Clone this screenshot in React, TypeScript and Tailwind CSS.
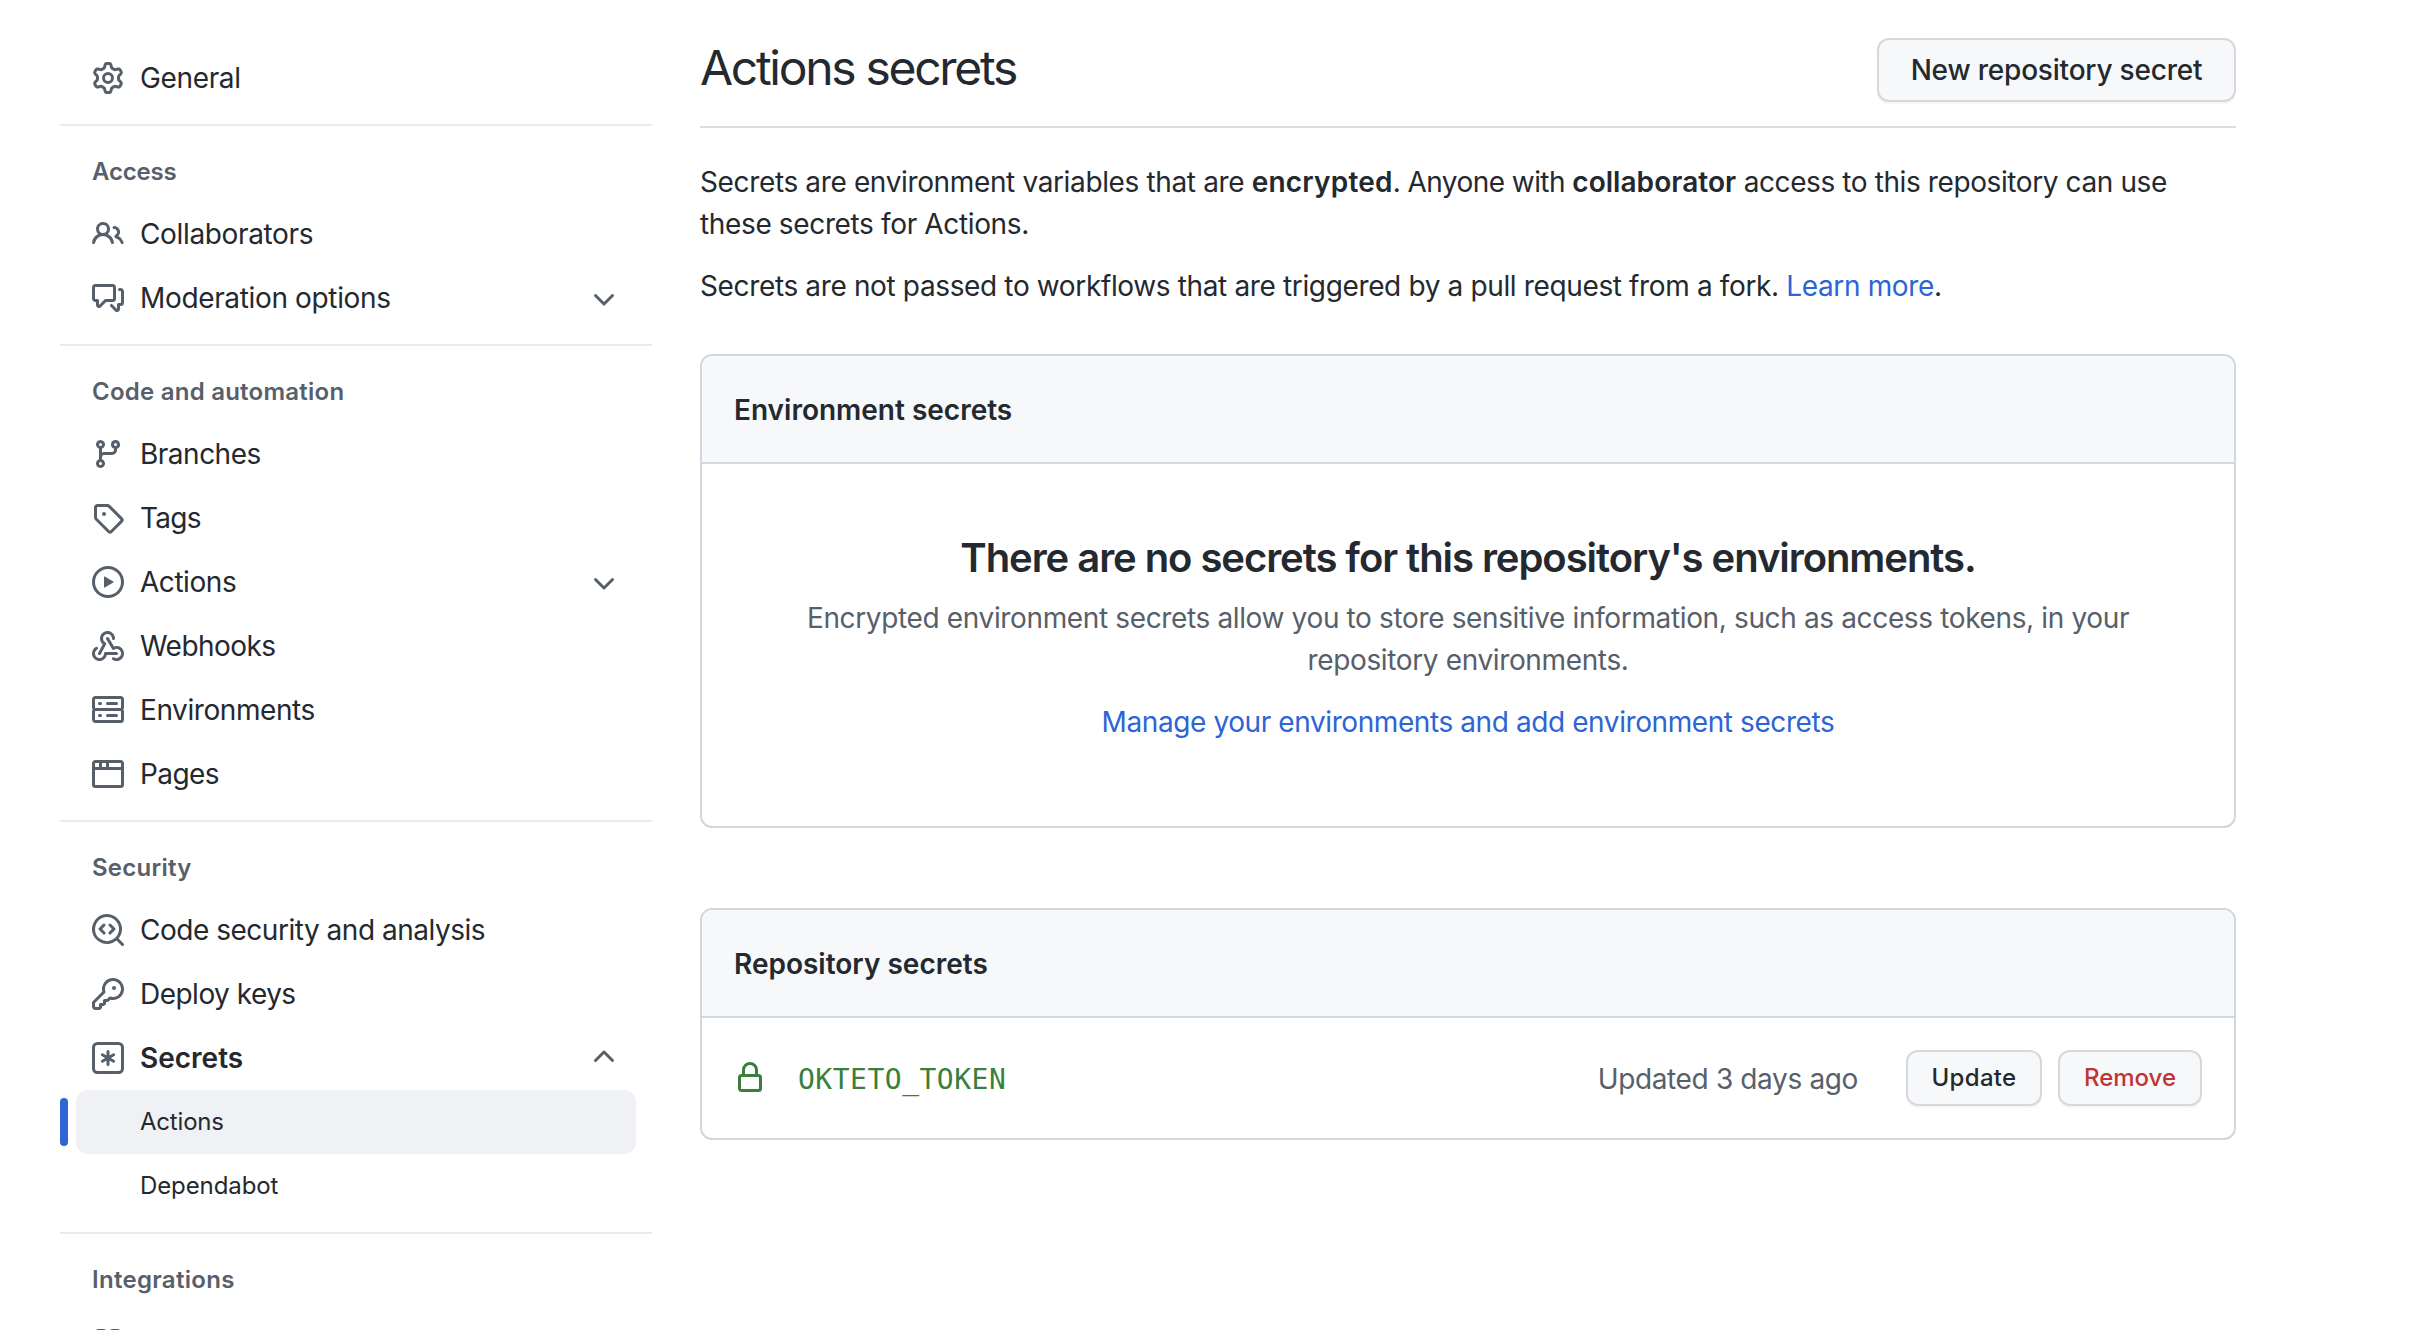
import type { ReactNode } from 'react';

const PATHS = {
  gear: 'M7.429 1.525a6.593 6.593 0 011.142 0c.036.003.108.036.137.146l.289 1.105c.147.56.55.967.997 1.189.174.086.341.183.501.29.417.278.97.423 1.53.27l1.102-.303c.11-.03.175.016.195.046.219.31.41.641.573.989.014.031.022.11-.059.19l-.815.806c-.411.406-.562.957-.53 1.456a4.588 4.588 0 010 .582c-.032.499.119 1.05.53 1.456l.815.806c.08.08.073.159.059.19a6.494 6.494 0 01-.573.99c-.02.029-.086.074-.195.045l-1.103-.303c-.559-.153-1.112-.008-1.529.27-.16.107-.327.204-.5.29-.449.222-.851.628-.998 1.189l-.289 1.105c-.029.11-.101.143-.137.146a6.613 6.613 0 01-1.142 0c-.036-.003-.108-.037-.137-.146l-.289-1.105c-.147-.56-.55-.967-.997-1.189a4.502 4.502 0 01-.501-.29c-.417-.278-.97-.423-1.53-.27l-1.102.303c-.11.03-.175-.016-.195-.046a6.492 6.492 0 01-.573-.989c-.014-.031-.022-.11.059-.19l.815-.806c.411-.406.562-.957.53-1.456a4.587 4.587 0 010-.582c.032-.499-.119-1.05-.53-1.456l-.815-.806c-.08-.08-.073-.159-.059-.19a6.44 6.44 0 01.573-.99c.02-.029.086-.075.195-.045l1.103.303c.559.153 1.112.008 1.529-.27.16-.107.327-.204.5-.29.449-.222.851-.628.998-1.189l.289-1.105c.029-.11.101-.143.137-.146zM8 0c-.236 0-.47.01-.701.03-.743.065-1.29.615-1.458 1.261l-.29 1.106c-.017.066-.078.158-.211.224a5.994 5.994 0 00-.668.386c-.123.082-.233.09-.3.071L3.27 2.776c-.644-.177-1.392.02-1.82.63a7.977 7.977 0 00-.704 1.217c-.315.675-.111 1.422.363 1.891l.815.806c.05.048.098.147.088.294a6.084 6.084 0 000 .772c.01.147-.038.246-.088.294l-.815.806c-.474.469-.678 1.216-.363 1.891.2.428.436.835.704 1.218.428.609 1.176.806 1.82.63l1.103-.303c.066-.019.176-.011.299.071.213.143.436.272.668.386.133.066.194.158.212.224l.289 1.106c.169.646.715 1.196 1.458 1.26a8.094 8.094 0 001.402 0c.743-.064 1.29-.614 1.458-1.26l.29-1.106c.017-.066.078-.158.211-.224a5.98 5.98 0 00.668-.386c.123-.082.233-.09.3-.071l1.102.302c.644.177 1.392-.02 1.82-.63.268-.382.505-.789.704-1.217.315-.675.111-1.422-.364-1.891l-.814-.806c-.05-.048-.098-.147-.088-.294a6.1 6.1 0 000-.772c-.01-.147.039-.246.088-.294l.814-.806c.475-.469.679-1.216.364-1.891a7.992 7.992 0 00-.704-1.218c-.428-.609-1.176-.806-1.82-.63l-1.103.303c-.066.019-.176.011-.299-.071a5.991 5.991 0 00-.668-.386c-.133-.066-.194-.158-.212-.224L10.16 1.29C9.99.645 9.444.095 8.701.031A8.094 8.094 0 008 0zm1.5 8a1.5 1.5 0 11-3 0 1.5 1.5 0 013 0zM11 8a3 3 0 11-6 0 3 3 0 016 0z',
  people: 'M5.5 3.5a2 2 0 100 4 2 2 0 000-4zM2 5.5a3.5 3.5 0 115.898 2.549 5.507 5.507 0 013.034 4.084.75.75 0 11-1.482.235 4.001 4.001 0 00-7.9 0 .75.75 0 01-1.482-.236A5.507 5.507 0 013.102 8.05 3.49 3.49 0 012 5.5zM11 4a.75.75 0 100 1.5 1.5 1.5 0 01.666 2.844.75.75 0 00-.416.672v.352a.75.75 0 00.574.73c1.2.289 2.162 1.2 2.522 2.372a.75.75 0 101.434-.44 5.01 5.01 0 00-2.56-3.012A3 3 0 0011 4z',
  discussion: 'M1.5 2.75a.25.25 0 01.25-.25h8.5a.25.25 0 01.25.25v5.5a.25.25 0 01-.25.25h-3.5a.75.75 0 00-.53.22L3.5 11.44V9.25a.75.75 0 00-.75-.75h-1a.25.25 0 01-.25-.25v-5.5zM1.75 1A1.75 1.75 0 000 2.75v5.5C0 9.216.784 10 1.75 10H2v1.543a1.457 1.457 0 002.487 1.03L7.061 10h3.189A1.75 1.75 0 0012 8.25v-5.5A1.75 1.75 0 0010.25 1h-8.5zM14.5 4.75a.25.25 0 00-.25-.25h-.5a.75.75 0 110-1.5h.5c.966 0 1.75.784 1.75 1.75v5.5A1.75 1.75 0 0114.25 12H14v1.543a1.457 1.457 0 01-2.487 1.03L9.22 12.28a.75.75 0 111.06-1.06l2.22 2.22v-2.19a.75.75 0 01.75-.75h1a.25.25 0 00.25-.25v-5.5z',
  branch: 'M11.75 2.5a.75.75 0 100 1.5.75.75 0 000-1.5zm-2.25.75a2.25 2.25 0 113 2.122V6A2.5 2.5 0 0110 8.5H6a1 1 0 00-1 1v1.128a2.251 2.251 0 11-1.5 0V5.372a2.25 2.25 0 111.5 0v1.836A2.492 2.492 0 016 7h4a1 1 0 001-1v-.628A2.25 2.25 0 019.5 3.25zM4.25 12a.75.75 0 100 1.5.75.75 0 000-1.5zM3.5 3.25a.75.75 0 111.5 0 .75.75 0 01-1.5 0z',
  tag: 'M2.5 7.775V2.75a.25.25 0 01.25-.25h5.025a.25.25 0 01.177.073l6.25 6.25a.25.25 0 010 .354l-5.025 5.025a.25.25 0 01-.354 0l-6.25-6.25a.25.25 0 01-.073-.177zm-1.5 0V2.75C1 1.784 1.784 1 2.75 1h5.025c.464 0 .91.184 1.238.513l6.25 6.25a1.75 1.75 0 010 2.474l-5.026 5.026a1.75 1.75 0 01-2.474 0l-6.25-6.25A1.75 1.75 0 011 7.775zM6 5a1 1 0 100 2 1 1 0 000-2z',
  play: 'M1.5 8a6.5 6.5 0 1113 0 6.5 6.5 0 01-13 0zM8 0a8 8 0 100 16A8 8 0 008 0zM6.379 5.227A.25.25 0 006 5.442v5.117a.25.25 0 00.379.214l4.264-2.559a.25.25 0 000-.428L6.379 5.227z',
  server: 'M1.75 1A1.75 1.75 0 000 2.75v4c0 .372.116.717.314 1a1.742 1.742 0 00-.314 1v4c0 .966.784 1.75 1.75 1.75h12.5A1.75 1.75 0 0016 12.75v-4c0-.372-.116-.717-.314-1 .198-.283.314-.628.314-1v-4A1.75 1.75 0 0014.25 1H1.75zm0 7.5a.25.25 0 00-.25.25v4c0 .138.112.25.25.25h12.5a.25.25 0 00.25-.25v-4a.25.25 0 00-.25-.25H1.75zM1.5 2.75a.25.25 0 01.25-.25h12.5a.25.25 0 01.25.25v4a.25.25 0 01-.25.25H1.75a.25.25 0 01-.25-.25v-4zm5.5 2A.75.75 0 017.75 4h4.5a.75.75 0 010 1.5h-4.5A.75.75 0 017 4.75zM7.75 10a.75.75 0 000 1.5h4.5a.75.75 0 000-1.5h-4.5zM3 4.75A.75.75 0 013.75 4h.5a.75.75 0 010 1.5h-.5A.75.75 0 013 4.75zM3.75 10a.75.75 0 000 1.5h.5a.75.75 0 000-1.5h-.5z',
  browser: 'M0 2.75C0 1.784.784 1 1.75 1h12.5c.966 0 1.75.784 1.75 1.75v10.5A1.75 1.75 0 0114.25 15H1.75A1.75 1.75 0 010 13.25V2.75zm1.75-.25a.25.25 0 00-.25.25V4.5h2v-2H1.75zM5 2.5v2h2v-2H5zm3.5 0v2h6V2.75a.25.25 0 00-.25-.25H8.5zm6 3.5h-13v7.25c0 .138.112.25.25.25h12.5a.25.25 0 00.25-.25V6z',
  codescan: 'M8.47 4.97a.75.75 0 000 1.06L9.94 7.5 8.47 8.97a.75.75 0 101.06 1.06l2-2a.75.75 0 000-1.06l-2-2a.75.75 0 00-1.06 0zM6.53 6.03a.75.75 0 00-1.06-1.06l-2 2a.75.75 0 000 1.06l2 2a.75.75 0 101.06-1.06L5.06 7.5l1.47-1.47z M12.246 13.307a7.5 7.5 0 111.06-1.06l2.474 2.473a.75.75 0 11-1.06 1.06l-2.474-2.473zM1.5 7.5a6 6 0 1110.386 4.094.75.75 0 00-.292.293A6 6 0 011.5 7.5z',
  key: 'M6.5 5.5a4 4 0 112.731 3.795.75.75 0 00-.768.18L7.44 10.5H6.25a.75.75 0 00-.75.75v1.19l-.06.06H4.25a.75.75 0 00-.75.75v1.19l-.06.06H1.75a.25.25 0 01-.25-.25v-1.69l5.024-5.023a.75.75 0 00.181-.768A3.995 3.995 0 016.5 5.5zm4-5.5a5.5 5.5 0 00-5.348 6.788L.22 11.72a.75.75 0 00-.22.53v2C0 15.216.784 16 1.75 16h2a.75.75 0 00.53-.22l.5-.5a.75.75 0 00.22-.53V14h.75a.75.75 0 00.53-.22l.5-.5a.75.75 0 00.22-.53V12h.75a.75.75 0 00.53-.22l.932-.932A5.5 5.5 0 1010.5 0zm.5 6a1 1 0 100-2 1 1 0 000 2z',
  lock: 'M4 4v2h-.25A1.75 1.75 0 002 7.75v5.5c0 .966.784 1.75 1.75 1.75h8.5A1.75 1.75 0 0014 13.25v-5.5A1.75 1.75 0 0012.25 6H12V4a4 4 0 10-8 0zm6.5 2V4a2.5 2.5 0 10-5 0v2h5zM12 7.5h.25a.25.25 0 01.25.25v5.5a.25.25 0 01-.25.25h-8.5a.25.25 0 01-.25-.25v-5.5a.25.25 0 01.25-.25H12z',
  apps: 'M1.5 3.25c0-.966.784-1.75 1.75-1.75h2.5c.966 0 1.75.784 1.75 1.75v2.5A1.75 1.75 0 015.75 7.5h-2.5A1.75 1.75 0 011.5 5.75v-2.5zM3.25 3a.25.25 0 00-.25.25v2.5c0 .138.112.25.25.25h2.5A.25.25 0 006 5.75v-2.5A.25.25 0 005.75 3h-2.5zM8.5 3.25c0-.966.784-1.75 1.75-1.75h2.5c.966 0 1.75.784 1.75 1.75v2.5a1.75 1.75 0 01-1.75 1.75h-2.5A1.75 1.75 0 018.5 5.75v-2.5zm1.75-.25a.25.25 0 00-.25.25v2.5c0 .138.112.25.25.25h2.5a.25.25 0 00.25-.25v-2.5a.25.25 0 00-.25-.25h-2.5z',
  chevronDown: 'M12.78 6.22a.75.75 0 010 1.06l-4.25 4.25a.75.75 0 01-1.06 0L3.22 7.28a.75.75 0 011.06-1.06L8 9.94l3.72-3.72a.75.75 0 011.06 0z',
  chevronUp: 'M3.22 9.78a.75.75 0 010-1.06l4.25-4.25a.75.75 0 011.06 0l4.25 4.25a.75.75 0 01-1.06 1.06L8 6.06 4.28 9.78a.75.75 0 01-1.06 0z',
};

function Icon({ name }: { name: keyof typeof PATHS }) {
  return (
    <svg viewBox="0 0 16 16" className="size-8 shrink-0" fill="currentColor" fillRule="evenodd">
      <path d={PATHS[name]} />
    </svg>
  );
}

function WebhookIcon() {
  return (
    <svg viewBox="0 0 16 16" className="size-8 shrink-0" fill="currentColor">
      <path d="M5.5 4.25a2.25 2.25 0 014.5 0 .75.75 0 001.5 0 3.75 3.75 0 10-6.14 2.889l-2.272 4.258a.75.75 0 001.324.706L7 7.25a.75.75 0 00-.309-1.015A2.25 2.25 0 015.5 4.25z" />
      <path d="M7.364 3.607a.75.75 0 011.03.257l2.608 4.349a3.75 3.75 0 11-.628 6.785.75.75 0 01.752-1.299 2.25 2.25 0 10-.033-3.88.75.75 0 01-1.03-.256L7.107 4.636a.75.75 0 01.257-1.03z" />
      <path d="M2.9 8.776A.75.75 0 012.625 9.8 2.25 2.25 0 106 11.75a.75.75 0 01.75-.751h5.5a.75.75 0 010 1.5H7.425a3.751 3.751 0 11-5.55-3.998.75.75 0 011.024.274z" />
    </svg>
  );
}

function AsteriskBoxIcon() {
  return (
    <svg viewBox="0 0 16 16" className="size-8 shrink-0" fill="none" stroke="currentColor" strokeWidth="1.5" strokeLinecap="round">
      <rect x="0.75" y="0.75" width="14.5" height="14.5" rx="2" />
      <path d="M8 4.75v6.5M5.19 6.38l5.62 3.24M10.81 6.38L5.19 9.62" />
    </svg>
  );
}

function Heading({ children, className = 'tracking-[0.24px]' }: { children: ReactNode; className?: string }) {
  return (
    <h2 className={`h-[76px] px-8 pt-7 text-2xl leading-9 font-semibold text-[#57606a] ${className}`}>{children}</h2>
  );
}

type ItemProps = { icon: ReactNode; label: string; chevron?: 'chevronDown' | 'chevronUp'; labelClass?: string };

function Item({ icon, label, chevron, labelClass = 'tracking-[-0.35px]' }: ItemProps) {
  return (
    <li className="flex h-16 items-center gap-4 pr-8 pl-8 text-[#57606a]">
      {icon}
      <span className={`flex-1 text-[28px] leading-10 text-[#24292f] ${labelClass}`}>{label}</span>
      {chevron && <Icon name={chevron} />}
    </li>
  );
}

function Divider() {
  return <hr className="mt-3.5 h-0.5 border-0 bg-[#e8ebef]" />;
}

function Sidebar() {
  return (
    <nav className="w-[592px] shrink-0 pt-[46px]">
      <ul>
        <Item icon={<Icon name="gear" />} label="General" />
      </ul>
      <Divider />
      <Heading className="tracking-[-0.2px]">Access</Heading>
      <ul>
        <Item icon={<Icon name="people" />} label="Collaborators" />
        <Item icon={<Icon name="discussion" />} label="Moderation options" chevron="chevronDown" />
      </ul>
      <Divider />
      <Heading>Code and automation</Heading>
      <ul>
        <Item icon={<Icon name="branch" />} label="Branches" labelClass="tracking-[-0.5px]" />
        <Item icon={<Icon name="tag" />} label="Tags" labelClass="tracking-[-0.7px]" />
        <Item icon={<Icon name="play" />} label="Actions" chevron="chevronDown" labelClass="tracking-[-0.45px]" />
        <Item icon={<WebhookIcon />} label="Webhooks" labelClass="tracking-[-0.55px]" />
        <Item icon={<Icon name="server" />} label="Environments" labelClass="tracking-[-0.42px]" />
        <Item icon={<Icon name="browser" />} label="Pages" labelClass="tracking-[-0.6px]" />
      </ul>
      <Divider />
      <Heading>Security</Heading>
      <ul>
        <Item icon={<Icon name="codescan" />} label="Code security and analysis" labelClass="tracking-[-0.48px]" />
        <Item icon={<Icon name="key" />} label="Deploy keys" labelClass="tracking-[-0.52px]" />
        <Item icon={<AsteriskBoxIcon />} label="Secrets" chevron="chevronUp" labelClass="font-semibold" />
        <li className="flex h-16 items-center gap-2 pr-4">
          <span className="h-12 w-2 rounded-full bg-[#2f66d6]" />
          <span className="flex h-full flex-1 items-center rounded-xl bg-[#f0f1f4] pl-16 text-2xl tracking-[-0.2px] text-[#24292f]">
            Actions
          </span>
        </li>
        <li className="flex h-16 items-center pl-20 text-2xl tracking-[-0.1px] text-[#24292f]">Dependabot</li>
      </ul>
      <Divider />
      <Heading className="tracking-[0.3px]">Integrations</Heading>
      <ul>
        <Item icon={<Icon name="apps" />} label="" />
      </ul>
    </nav>
  );
}

function Button({ className, children }: { className: string; children: ReactNode }) {
  return (
    <button
      className={`flex items-center justify-center rounded-xl border-2 border-[#d6d8db] bg-[#f6f8fa] font-medium shadow-[0_2px_0_rgba(27,31,36,0.04)] ${className}`}
    >
      {children}
    </button>
  );
}

function Box({ title, children }: { title: string; children: ReactNode }) {
  return (
    <section className="overflow-hidden rounded-xl border-2 border-[#d0d7de] bg-white">
      <h3 className="border-b-2 border-[#d4d9e0] bg-[#f6f8fa] px-8 pt-[33px] pb-[31px] text-[28px] leading-[42px] font-semibold">
        {title}
      </h3>
      {children}
    </section>
  );
}

function Main() {
  return (
    <main className="w-[1536px] text-[28px] leading-[42px] tracking-[-0.36px] text-[#24292f]">
      <header className="flex h-32 items-start justify-between border-b-2 border-[#d8dee4]">
        <h1 className="pt-8 text-5xl leading-[72px] tracking-[-2.3px]">Actions secrets</h1>
        <Button className="mt-[38px] h-16 w-[359px] text-[28px] tracking-[-0.2px]">New repository secret</Button>
      </header>
      <p className="mt-[33px]">
        Secrets are environment variables that are <strong className="font-semibold tracking-[0.2px]">encrypted</strong>
        <span className="tracking-[-0.56px]">. Anyone with </span>
        <strong className="font-semibold tracking-[0.05px]">collaborator</strong>
        <span className="tracking-[-0.4px]"> access to this repository can use</span>
        <br />
        these secrets for Actions.
      </p>
      <p className="mt-5 mb-[47px]">
        Secrets are not passed to workflows that are triggered by a pull request from a fork.{' '}
        <a className="text-[#2d64d6]">Learn more</a>.
      </p>
      <div className="tracking-normal">
        <Box title="Environment secrets">
          <div className="h-[362px] pt-16 text-center">
            <h3 className="text-[40px] leading-[60px] font-semibold tracking-[-1.06px]">
              There are no secrets for this repository's environments.
            </h3>
            <p className="mt-[9px] tracking-[-0.36px] text-[#57606a]">
              Encrypted environment secrets allow you to store sensitive information, such as access tokens, in your
              <br />
              repository environments.
            </p>
            <p className="mt-5 tracking-[-0.41px]">
              <a className="text-[#2d64d6]">Manage your environments and add environment secrets</a>
            </p>
          </div>
        </Box>
        <div className="h-20" />
        <Box title="Repository secrets">
          <div className="flex h-[120px] items-center px-8">
            <span className="flex text-[#3a7f3c]">
              <Icon name="lock" />
            </span>
            <code className="ml-8 flex-1 pt-1 font-['DejaVu_Sans_Mono',monospace] text-[28px] tracking-[0.5px] text-[#3a7f3c]">
              OKTETO_TOKEN
            </code>
            <span className="mr-12 pt-0.5 tracking-[-0.36px] text-[#57606a]">Updated 3 days ago</span>
            <Button className="mr-4 h-14 w-[136px] text-2xl tracking-[0.3px]">Update</Button>
            <Button className="h-14 w-36 text-2xl text-[#bf3434]">Remove</Button>
          </div>
        </Box>
      </div>
    </main>
  );
}

export default function App() {
  return (
    <div className="flex h-[1330px] gap-12 overflow-hidden bg-white pl-[60px] font-['Inter',sans-serif]">
      <Sidebar />
      <Main />
    </div>
  );
}
